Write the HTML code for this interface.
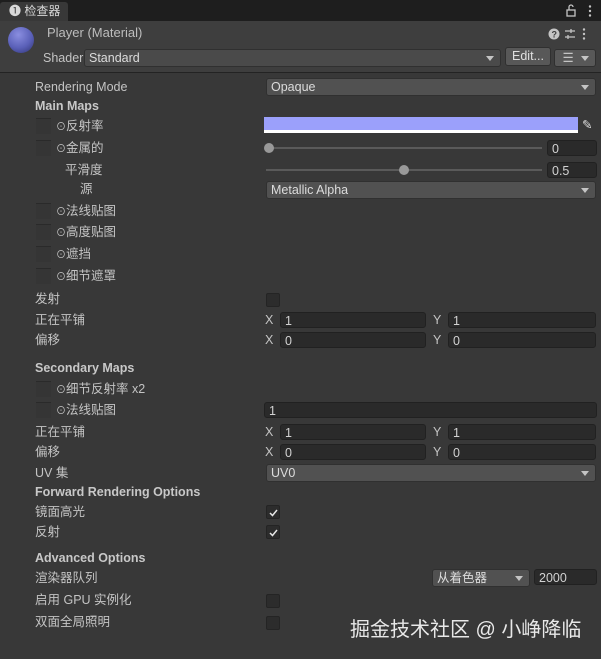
<!DOCTYPE html>
<html><head><meta charset="utf-8"><style>
body{margin:0;width:601px;height:659px;background:#383838;overflow:hidden;font-family:"Liberation Sans","Noto Sans CJK SC",sans-serif;font-size:12.5px;color:#c4c4c4;position:relative}
.a{position:absolute;white-space:nowrap}
.t{position:absolute;line-height:16px;white-space:nowrap}
.b{font-weight:bold;color:#c8c8c8}
.f{position:absolute;background:#2a2a2a;border:1px solid #212121;border-radius:3px;height:16px;line-height:16px;padding-left:4px;box-sizing:border-box;color:#d2d2d2}
.dd{position:absolute;background:#515151;border:1px solid #303030;border-radius:3px;height:18px;line-height:16px;padding-left:4px;box-sizing:border-box;color:#dcdcdc}
.dd:after{content:"";position:absolute;right:6px;top:6px;border-left:4px solid transparent;border-right:4px solid transparent;border-top:5px solid #c4c4c4}
.cb{position:absolute;width:14px;height:14px;background:#2c2c2c;border:1px solid #242424;border-radius:2px;box-sizing:border-box}
.tb{position:absolute;width:15px;height:15px;background:#353535;border-top:1px solid #2a2a2a}
.ck svg{position:absolute;left:2px;top:2px}
.o{font-size:10px}
</style></head><body>
<div class="a" style="left:0;top:0;width:601px;height:21px;background:#1e1e1e"></div>
<div class="a" style="left:0;top:2px;width:68px;height:19px;background:#383838;border-radius:3px 3px 0 0"></div>
<div class="t" style="left:9px;top:3px;font-size:12px;color:#d8d8d8">❶ 检查器</div>
<svg class="a" style="left:566px;top:4px" width="30" height="14"><rect x="1" y="6" width="8" height="6" fill="none" stroke="#c4c4c4" stroke-width="1.3"/><path d="M3 6V3a2 2 0 0 1 4 0" fill="none" stroke="#c4c4c4" stroke-width="1.3"/><circle cx="24" cy="2.5" r="1.2" fill="#c4c4c4"/><circle cx="24" cy="7" r="1.2" fill="#c4c4c4"/><circle cx="24" cy="11.5" r="1.2" fill="#c4c4c4"/></svg>
<div class="a" style="left:0;top:21px;width:601px;height:51px;background:#3e3e3e;border-bottom:1px solid #232323"></div>
<div class="a" style="left:8px;top:27px;width:26px;height:26px;border-radius:50%;background:radial-gradient(circle at 40% 30%,#8a8ee0,#5a60b8 55%,#2e3270)"></div>
<div class="t" style="left:47px;top:25px;color:#bdbdbd;font-size:13px">Player (Material)</div>
<svg class="a" style="left:548px;top:27px" width="50" height="14"><circle cx="6" cy="7" r="5.5" fill="#c4c4c4"/><text x="3.5" y="10.5" font-size="9" font-weight="bold" fill="#3e3e3e" font-family="Liberation Sans">?</text><path d="M17 4h10M17 10h10M23 2v4M20 8v4" stroke="#c4c4c4" stroke-width="1.3"/><circle cx="36" cy="2.5" r="1.2" fill="#c4c4c4"/><circle cx="36" cy="7" r="1.2" fill="#c4c4c4"/><circle cx="36" cy="11.5" r="1.2" fill="#c4c4c4"/></svg>
<div class="t" style="left:43px;top:50px;font-size:12.5px">Shader</div>
<div class="dd" style="left:84px;top:49px;width:417px;background:#4a4a4a">Standard</div>
<div class="a" style="left:505px;top:47px;width:46px;height:19px;background:#585858;border:1px solid #303030;border-radius:3px;box-sizing:border-box;line-height:17px;text-align:center;color:#e0e0e0">Edit...</div>
<div class="dd" style="left:554px;top:49px;width:42px;background:#585858;color:#c4c4c4">&nbsp;☰</div>

<div class="t" style="left:35px;top:79px">Rendering Mode</div>
<div class="dd" style="left:266px;top:78px;width:330px">Opaque</div>
<div class="t b" style="left:35px;top:98px">Main Maps</div>

<div class="tb" style="left:36px;top:118px"></div><div class="t" style="left:56px;top:118px"><span class="o">⊙</span>反射率</div>
<div class="a" style="left:264px;top:117px;width:314px;height:16px;background:#9ba0fb;border-bottom:3px solid #fff;box-sizing:border-box"></div>
<div class="t" style="left:582px;top:117px;color:#ddd">✎</div>
<div class="tb" style="left:36px;top:140px"></div><div class="t" style="left:56px;top:140px"><span class="o">⊙</span>金属的</div>
<div class="a" style="left:266px;top:147px;width:276px;height:2px;background:#5a5a5a"></div>
<div class="a" style="left:264px;top:143px;width:10px;height:10px;border-radius:50%;background:#999"></div>
<div class="f" style="left:547px;top:140px;width:50px">0</div>
<div class="t" style="left:65px;top:162px">平滑度</div>
<div class="a" style="left:266px;top:169px;width:276px;height:2px;background:#5a5a5a"></div>
<div class="a" style="left:399px;top:165px;width:10px;height:10px;border-radius:50%;background:#999"></div>
<div class="f" style="left:547px;top:162px;width:50px">0.5</div>
<div class="t" style="left:80px;top:181px">源</div>
<div class="dd" style="left:266px;top:181px;width:330px">Metallic Alpha</div>
<div class="tb" style="left:36px;top:203px"></div><div class="t" style="left:56px;top:203px"><span class="o">⊙</span>法线贴图</div>
<div class="tb" style="left:36px;top:224px"></div><div class="t" style="left:56px;top:224px"><span class="o">⊙</span>高度贴图</div>
<div class="tb" style="left:36px;top:246px"></div><div class="t" style="left:56px;top:246px"><span class="o">⊙</span>遮挡</div>
<div class="tb" style="left:36px;top:268px"></div><div class="t" style="left:56px;top:268px"><span class="o">⊙</span>细节遮罩</div>

<div class="t" style="left:35px;top:291px">发射</div><div class="cb" style="left:266px;top:293px"></div>
<div class="t" style="left:35px;top:312px">正在平铺</div>
<div class="t" style="left:265px;top:312px">X</div><div class="f" style="left:280px;top:312px;width:146px">1</div>
<div class="t" style="left:433px;top:312px">Y</div><div class="f" style="left:448px;top:312px;width:148px">1</div>
<div class="t" style="left:35px;top:332px">偏移</div>
<div class="t" style="left:265px;top:332px">X</div><div class="f" style="left:280px;top:332px;width:146px">0</div>
<div class="t" style="left:433px;top:332px">Y</div><div class="f" style="left:448px;top:332px;width:148px">0</div>

<div class="t b" style="left:35px;top:360px">Secondary Maps</div>
<div class="tb" style="left:36px;top:381px"></div><div class="t" style="left:56px;top:381px"><span class="o">⊙</span>细节反射率 x2</div>
<div class="tb" style="left:36px;top:402px"></div><div class="t" style="left:56px;top:402px"><span class="o">⊙</span>法线贴图</div>
<div class="f" style="left:264px;top:402px;width:333px">1</div>
<div class="t" style="left:35px;top:424px">正在平铺</div>
<div class="t" style="left:265px;top:424px">X</div><div class="f" style="left:280px;top:424px;width:146px">1</div>
<div class="t" style="left:433px;top:424px">Y</div><div class="f" style="left:448px;top:424px;width:148px">1</div>
<div class="t" style="left:35px;top:444px">偏移</div>
<div class="t" style="left:265px;top:444px">X</div><div class="f" style="left:280px;top:444px;width:146px">0</div>
<div class="t" style="left:433px;top:444px">Y</div><div class="f" style="left:448px;top:444px;width:148px">0</div>
<div class="t" style="left:35px;top:465px">UV 集</div>
<div class="dd" style="left:266px;top:464px;width:330px">UV0</div>
<div class="t b" style="left:35px;top:484px">Forward Rendering Options</div>
<div class="t" style="left:35px;top:504px">镜面高光</div><div class="cb ck" style="left:266px;top:505px"><svg width="9" height="9"><path d="M1 5l2.5 2.5L8 2" fill="none" stroke="#e6e6e6" stroke-width="1.5"/></svg></div>
<div class="t" style="left:35px;top:524px">反射</div><div class="cb ck" style="left:266px;top:525px"><svg width="9" height="9"><path d="M1 5l2.5 2.5L8 2" fill="none" stroke="#e6e6e6" stroke-width="1.5"/></svg></div>
<div class="t b" style="left:35px;top:550px">Advanced Options</div>
<div class="t" style="left:35px;top:570px">渲染器队列</div>
<div class="dd" style="left:432px;top:569px;width:98px">从着色器</div>
<div class="f" style="left:534px;top:569px;width:63px">2000</div>
<div class="t" style="left:35px;top:592px">启用 GPU 实例化</div><div class="cb" style="left:266px;top:594px"></div>
<div class="t" style="left:35px;top:614px">双面全局照明</div><div class="cb" style="left:266px;top:616px"></div>
<div class="t" style="left:350px;top:618px;font-size:20px;line-height:24px;color:#e8e8e8">掘金技术社区 @ 小峥降临</div>
</body></html>
